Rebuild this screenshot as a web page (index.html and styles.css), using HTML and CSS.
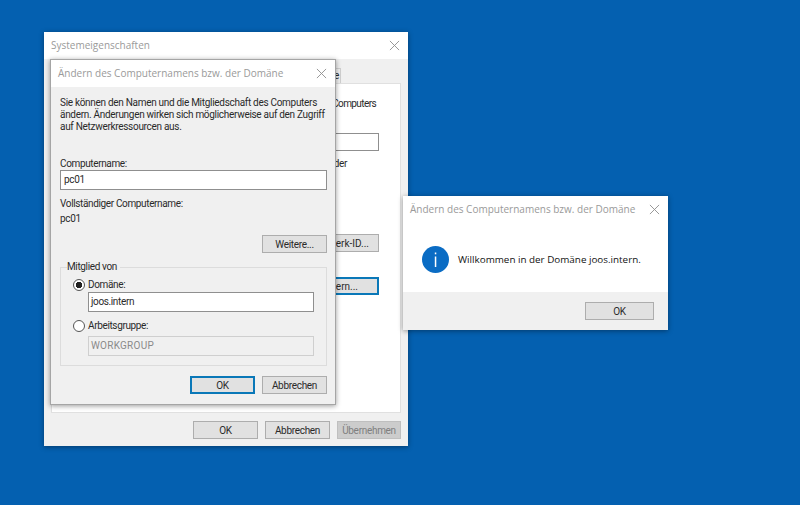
FILE: index.html
```html
<!DOCTYPE html>
<html lang="de">
<head>
  <meta charset="UTF-8">
  <title>Systemeigenschaften</title>
  <link rel="stylesheet" href="styles.css">
</head>
<body>
  <!-- Systemeigenschaften (hinten) -->
  <div class="window sys-window">
    <div class="titlebar">
      <span class="title">Systemeigenschaften</span>
      <svg class="close" viewBox="0 0 12 12"><path d="M1 1L11 11M11 1L1 11"/></svg>
    </div>
    <div class="sys-tabs"><span class="tab">Remote</span></div>
    <div class="sys-panel">
      <p class="sys-text sys-text-first">Computers</p>
      <div class="input sys-input"></div>
      <p class="sys-text sys-text-second">oder</p>
      <button class="btn sys-btn-id">Netzwerk-ID...</button>
      <button class="btn btn-focus sys-btn-change">Ändern...</button>
    </div>
    <div class="sys-footer">
      <button class="btn btn-footer">OK</button>
      <button class="btn btn-footer">Abbrechen</button>
      <button class="btn btn-footer btn-disabled">Übernehmen</button>
    </div>
  </div>

  <!-- Computername Dialog -->
  <div class="window name-window">
    <div class="titlebar">
      <span class="title">Ändern des Computernamens bzw. der Domäne</span>
      <svg class="close" viewBox="0 0 12 12"><path d="M1 1L11 11M11 1L1 11"/></svg>
    </div>
    <div class="name-body">
      <p class="intro">Sie können den Namen und die Mitgliedschaft des Computers ändern. Änderungen wirken sich möglicherweise auf den Zugriff auf Netzwerkressourcen aus.</p>
      <label class="label label-name">Computername:</label>
      <div class="input input-name">pc01</div>
      <p class="label label-full">Vollständiger Computername:</p>
      <p class="label label-value">pc01</p>
      <div class="row-more"><button class="btn btn-small">Weitere...</button></div>
      <fieldset class="group">
        <legend>Mitglied von</legend>
        <div class="radio-row">
          <span class="radio radio-on"></span>
          <span class="label">Domäne:</span>
        </div>
        <div class="input input-member">joos.intern</div>
        <div class="radio-row radio-row-second">
          <span class="radio"></span>
          <span class="label">Arbeitsgruppe:</span>
        </div>
        <div class="input input-member input-disabled">WORKGROUP</div>
      </fieldset>
      <div class="name-actions">
        <button class="btn btn-small btn-focus">OK</button>
        <button class="btn btn-small">Abbrechen</button>
      </div>
    </div>
  </div>

  <!-- Willkommen Meldung -->
  <div class="window msg-window">
    <div class="titlebar">
      <span class="title">Ändern des Computernamens bzw. der Domäne</span>
      <svg class="close" viewBox="0 0 12 12"><path d="M1 1L11 11M11 1L1 11"/></svg>
    </div>
    <div class="msg-body">
      <svg class="info-icon" viewBox="0 0 27 27">
        <circle cx="13.5" cy="13.5" r="13.5" fill="#0a6cc4"/>
        <rect x="12.8" y="6.5" width="1.5" height="1.8" fill="#fff"/>
        <rect x="12.8" y="10.5" width="1.5" height="10.5" fill="#fff"/>
      </svg>
      <span class="msg-text">Willkommen in der Domäne joos.intern.</span>
    </div>
    <div class="msg-footer">
      <button class="btn btn-msg">OK</button>
    </div>
  </div>
</body>
</html>
```
FILE: styles.css
```css
* {
  margin: 0;
  padding: 0;
  box-sizing: border-box;
}

body {
  font-family: 'Roboto', 'Noto Sans', sans-serif;
  background-color: #0460b0;
  width: 800px;
  height: 505px;
  overflow: hidden;
  position: relative;
  color: #2a2a2a;
  font-size: 10px;
  letter-spacing: -0.36px;
}

/* Fenster */
.window {
  position: absolute;
  display: flex;
  flex-direction: column;
  background: #f0f0f0;
  box-shadow: 0 1px 5px rgba(0, 0, 0, 0.4);
}

.sys-window {
  left: 44px;
  top: 32px;
  width: 364px;
  height: 414px;
}

.name-window {
  left: 50px;
  top: 59px;
  width: 286px;
  height: 346px;
  border: 1px solid #a5a5a5;
}

.msg-window {
  left: 403px;
  top: 196px;
  width: 265px;
  height: 134px;
  background: #fff;
}

.titlebar {
  height: 27px;
  flex: none;
  background: #fff;
  display: flex;
  align-items: center;
  justify-content: space-between;
  padding: 0 8px 1px 7px;
}

.title {
  font-family: 'Open Sans', sans-serif;
  font-size: 10px;
  letter-spacing: 0;
  color: #9a9a9a;
}

.close {
  width: 11px;
  height: 11px;
  stroke: #8f8f8f;
  stroke-width: 1;
  fill: none;
}

/* Buttons */
.btn {
  font-family: inherit;
  font-size: 10px;
  letter-spacing: -0.3px;
  color: #2a2a2a;
  background: #e1e1e1;
  border: 1px solid #adadad;
}

.btn-focus {
  border: 2px solid #0a78b8;
}

.btn-footer {
  width: 65px;
  height: 18px;
}

.btn-small {
  width: 65px;
  height: 18px;
}

.btn-disabled {
  width: 64px;
  background: #cccccc;
  border-color: #bfbfbf;
  color: #7f7f7f;
}

.btn-msg {
  width: 69px;
  height: 18px;
}

/* Systemeigenschaften */
.sys-tabs {
  height: 24px;
  flex: none;
  display: flex;
  justify-content: flex-end;
  align-items: flex-end;
  padding-right: 67px;
}

.tab {
  width: 60px;
  height: 15px;
  border: 1px solid #d0d0d0;
  border-bottom: none;
  text-align: right;
  line-height: 14px;
  padding-right: 1px;
  overflow: hidden;
  background: #f0f0f0;
}

.sys-panel {
  margin: 0 7px;
  height: 330px;
  flex: none;
  background: #fff;
  border: 1px solid #e0e0e0;
  display: flex;
  flex-direction: column;
  align-items: flex-end;
  padding: 14px 21px 0 0;
}

.sys-text {
  white-space: nowrap;
  line-height: 12px;
}

.sys-text-first {
  margin-right: 3px;
  letter-spacing: -0.6px;
}

.sys-text-second {
  margin: 7px 32px 0 0;
}

.sys-input {
  width: 90px;
  height: 18px;
  margin-top: 23px;
  background: #fff;
}

.sys-btn-id {
  width: 90px;
  height: 18px;
  margin-top: 64px;
  text-align: right;
  padding-right: 9px;
  letter-spacing: 0;
}

.sys-btn-change {
  width: 90px;
  height: 18px;
  margin-top: 25px;
  text-align: right;
  padding-right: 19px;
  letter-spacing: 0;
}

.sys-footer {
  display: flex;
  justify-content: flex-end;
  gap: 7px;
  padding: 8px 7px 0 0;
}

/* Computername Dialog */
.name-body {
  flex: 1;
  padding: 10px 8px 0 9px;
  display: flex;
  flex-direction: column;
}

.intro {
  line-height: 12px;
  letter-spacing: -0.3px;
}

.label {
  line-height: 12px;
  display: block;
}

.label-name {
  margin-top: 25px;
}

.input {
  border: 1px solid #8f8f8f;
  background: #fff;
  line-height: 17px;
  padding-left: 3px;
}

.input-name {
  height: 20px;
}

.label-full {
  margin-top: 8px;
}

.label-value {
  margin-top: 3px;
}

.row-more {
  display: flex;
  justify-content: flex-end;
  margin-top: 10px;
}

.group {
  margin-top: 8px;
  height: 105px;
  border: 1px solid #dcdcdc;
  padding: 0 12px;
}

.group legend {
  margin-left: -6px;
  line-height: 12px;
  padding-right: 3px;
}

.radio-row {
  display: flex;
  align-items: center;
  gap: 3px;
  height: 12px;
  margin-top: 6px;
}

.radio-row-second {
  margin-top: 8px;
}

.radio {
  width: 12px;
  height: 12px;
  border: 1px solid #555;
  border-radius: 50%;
  background: #fff;
  flex: none;
}

.radio-on {
  background: radial-gradient(circle, #222 0 3px, #fff 3.5px);
}

.input-member {
  height: 20px;
  margin: 1px 0 0 15px;
  padding-left: 2px;
}

.input-disabled {
  margin-top: 4px;
  background: #f0f0f0;
  border-color: #cfcfcf;
  color: #8a8a8a;
  letter-spacing: 0.25px;
}

.name-actions {
  display: flex;
  justify-content: flex-end;
  gap: 7px;
  margin-top: 10px;
}

/* Meldung */
.msg-body {
  height: 69px;
  flex: none;
  display: flex;
  align-items: center;
  padding: 3px 0 0 19px;
  gap: 9px;
}

.info-icon {
  width: 27px;
  height: 27px;
  flex: none;
}

.msg-text {
  font-family: 'Open Sans', sans-serif;
  font-size: 9.85px;
  letter-spacing: 0;
  color: #111;
}

.msg-footer {
  flex: 1;
  background: #f0f0f0;
  display: flex;
  justify-content: flex-end;
  align-items: flex-start;
  padding: 10px 14px 0 0;
}
```
